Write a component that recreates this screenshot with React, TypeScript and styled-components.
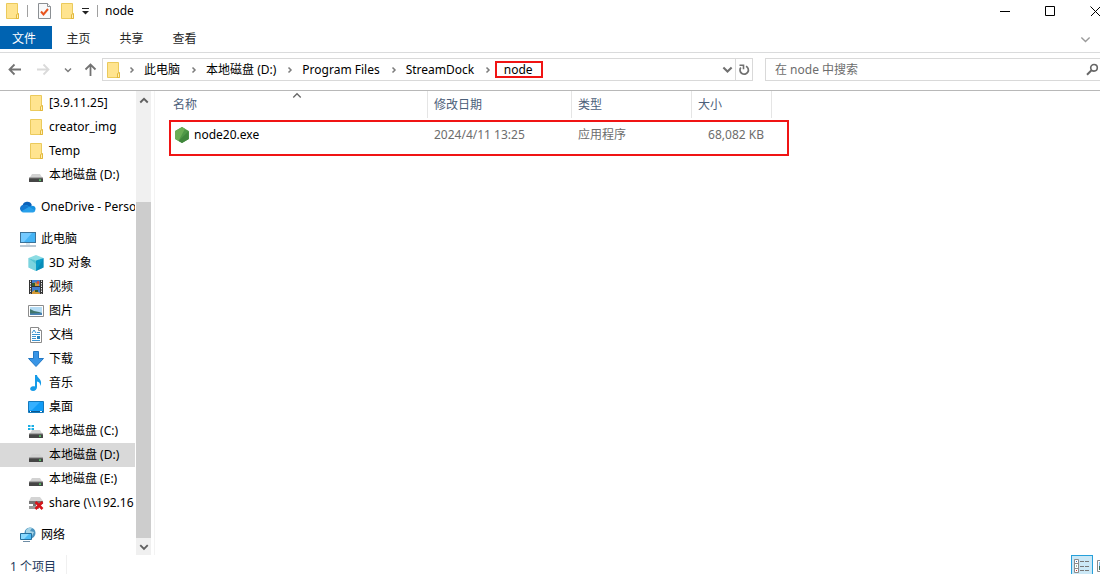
import React from 'react';
import styled, { createGlobalStyle } from 'styled-components';

const GlobalStyle = createGlobalStyle`
  * { box-sizing: border-box; }
  body {
    margin: 0;
    background: #fff;
    color: #000;
    font: 12px/16px "Noto Sans", "Noto Sans CJK SC", sans-serif;
  }
  button, input { font: inherit; color: inherit; }
  button { border: 0; padding: 0; background: none; }
  svg { display: block; flex: none; }
`;

const Window = styled.div`
  display: flex;
  flex-direction: column;
  min-height: 100vh;
  overflow: hidden;
`;

const TitleBar = styled.header`
  display: flex;
  align-items: center;
  height: 26px;
  padding: 0 0 4px 6px;
`;

const QuickTools = styled.div`
  display: flex;
  align-items: center;
  gap: 8px;
`;

const Divider = styled.span`
  width: 1px;
  height: 12px;
  background: #a0a0a0;
`;

const IconButton = styled.button`
  display: flex;
  align-items: center;
  justify-content: center;
  flex: none;
`;

const WindowTitle = styled.h1`
  margin: 0 0 0 7px;
  font-size: 12px;
  font-weight: 400;
`;

const WindowControls = styled.div`
  display: flex;
  gap: 35px;
  margin-left: auto;
`;

const Ribbon = styled.nav`
  display: flex;
  align-items: flex-start;
  height: 27px;
  padding-right: 9px;
  border-bottom: 1px solid #dadbdc;
`;

const Tab = styled.button<{ $primary?: boolean }>`
  width: ${p => (p.$primary ? 52 : 53)}px;
  height: 23px;
  padding: 2px ${p => (p.$primary ? 4 : 0)}px 0 0;
  background: ${p => (p.$primary ? '#0063b1' : 'transparent')};
  color: ${p => (p.$primary ? '#fff' : '#262626')};
`;

const RibbonToggle = styled(IconButton)`
  height: 26px;
  margin-left: auto;
`;

const NavBar = styled.div`
  display: flex;
  align-items: center;
  height: 38px;
  padding: 0 0 4px 6px;
  border-bottom: 1px solid #b8b8b8;
`;

const NavButtons = styled.div`
  display: flex;
  align-items: center;
  gap: 12px;
  width: 96px;
`;

const HistoryButton = styled(IconButton)`
  padding: 0 2px;
`;

const AddressBox = styled.div`
  display: flex;
  align-items: center;
  flex: 1;
  height: 23px;
  margin-right: 12px;
  border: 1px solid #d9d9d9;
  padding-left: 4px;
`;

const Crumbs = styled.ol`
  display: flex;
  align-items: center;
  flex: 1;
  margin: 0;
  padding: 0;
  list-style: none;
`;

const Crumb = styled.li`
  display: flex;
  align-items: center;
`;

const CrumbArrow = styled.span`
  display: flex;
  justify-content: center;
  width: 24px;
`;

const CrumbButton = styled.button<{ $marked?: boolean }>`
  height: 17px;
  padding-right: 2px;
  line-height: 13px;
  white-space: nowrap;
  ${p => p.$marked && `
    width: 48px;
    margin-left: -5px;
    border: 2px solid #f01414;
  `}
`;

const RefreshButton = styled(IconButton)`
  width: 17px;
  height: 21px;
  margin-left: 2px;
  border-left: 1px solid #d9d9d9;
`;

const SearchBox = styled.label`
  display: flex;
  align-items: center;
  width: 335px;
  height: 23px;
  padding: 0 1px 0 9px;
  border: 1px solid #d9d9d9;
  border-right: 0;
`;

const SearchInput = styled.input`
  flex: 1;
  min-width: 0;
  padding: 0;
  border: 0;
  outline: 0;
  &::placeholder { color: #6d6d6d; opacity: 1; }
`;

const Body = styled.div`
  display: flex;
  flex: 1;
`;

const Sidebar = styled.aside`
  display: flex;
  width: 155px;
  padding-right: 3px;
  border-right: 1px solid #f3f3f3;
`;

const Tree = styled.nav`
  display: flex;
  flex-direction: column;
  gap: 8px;
  width: 136px;
  padding-bottom: 8px;
  border-right: 1px solid #fff;
`;

const TreeGroup = styled.ul`
  margin: 0;
  padding: 0;
  list-style: none;
`;

const TreeItem = styled.button<{ $root?: boolean; $selected?: boolean }>`
  display: flex;
  align-items: center;
  gap: 5px;
  width: 100%;
  height: 24px;
  padding-left: ${p => (p.$root ? 20 : 28)}px;
  overflow: hidden;
  white-space: nowrap;
  background: ${p => (p.$selected ? '#d9d9d9' : 'transparent')};
`;

const ScrollTrack = styled.div`
  display: flex;
  flex-direction: column;
  width: 15px;
  background: #f0f0f0;
`;

const ScrollButton = styled(IconButton)`
  height: 17px;
`;

const ScrollThumb = styled.div`
  flex: 1;
  margin-top: 94px;
  background: #cdcdcd;
`;

const FilePane = styled.main`
  position: relative;
  flex: 1;
  padding-left: 12px;
`;

const FileTable = styled.table`
  width: 605px;
  table-layout: fixed;
  border-collapse: separate;
  border-spacing: 0;
`;

const HeadCell = styled.th<{ $width: number }>`
  position: relative;
  width: ${p => p.$width}px;
  height: 27px;
  padding: 0 6px;
  border-right: 1px solid #e5e5e5;
  color: #4c607a;
  font-weight: 400;
  text-align: left;
`;

const SortMark = styled.span`
  position: absolute;
  top: -1px;
  left: 50%;
  transform: translateX(-50%);
`;

const Cell = styled.td<{ $right?: boolean }>`
  height: 34px;
  padding: 0 8px 0 6px;
  color: #6d6d6d;
  text-align: ${p => (p.$right ? 'right' : 'left')};
`;

const FileName = styled.span`
  display: flex;
  align-items: center;
  gap: 4px;
  padding-left: 1px;
  color: #000;
`;

const Highlight = styled.div`
  position: absolute;
  top: 29px;
  left: 14px;
  width: 620px;
  height: 36px;
  border: 2px solid #f01414;
  pointer-events: none;
`;

const StatusBar = styled.footer`
  display: flex;
  align-items: flex-start;
  height: 19px;
  padding-left: 10px;
  overflow: hidden;
  color: #1e395b;
  line-height: 24px;
`;

const StatusCount = styled.span`
  padding-right: 10px;
  border-right: 1px solid #f0f0f0;
`;

const ViewButtons = styled.div`
  display: flex;
  gap: 4px;
  margin-left: auto;
`;

const ViewButton = styled(IconButton)<{ $active?: boolean }>`
  width: ${p => (p.$active ? 22 : 3)}px;
  height: 22px;
  overflow: hidden;
  background: ${p => (p.$active ? '#cbe8f6' : 'transparent')};
  border: ${p => (p.$active ? '1px solid #26a0da' : '0')};
`;

const FolderIcon = ({ box = 13 }: { box?: number }) => (
  <svg width={box} height="16" viewBox={`${box > 13 ? -2 : 0} 0 ${box} 16`}>
    <path d="M.5.5h11v10.500h1v4.500H.5z" fill="#ffe48f" stroke="#ebca5c" />
    <path d="M10.500 15V11.500L12.500 10.500V15.500H10z" fill="#fff0b5" stroke="#e3b93d" />
  </svg>
);

const CheckPageIcon = () => (
  <svg width="17" height="16" viewBox="-2 0 17 16">
    <path d="M.5.5h9l3 3v12H.5z" fill="#f8f9fa" stroke="#8b8f93" />
    <path d="M9.500.5v3h3" fill="#fff" stroke="#8b8f93" />
    <path d="M3 8.500l2.500 3L10 6" fill="none" stroke="#e8541e" strokeWidth="2" />
  </svg>
);

type ChevronProps = { dir: 'up' | 'down' | 'right'; size?: number; color?: string; weight?: number };
const Chevron = ({ dir, size = 8, color = '#7c7c7c', weight = 1.5 }: ChevronProps) => {
  const d = { up: 'M1 6l3-3 3 3', down: 'M1 2.500l3 3 3-3', right: 'M2.500 1.500L5 4 2.500 6.500' }[dir];
  return (
    <svg width={size} height={size} viewBox="0 0 8 8">
      <path d={d} fill="none" stroke={color} strokeWidth={weight} />
    </svg>
  );
};

const Arrow = ({ dir, color }: { dir: 'left' | 'right' | 'up'; color: string }) => (
  <svg width="13" height="13" viewBox="0 0 13 13">
    <g
      fill="none"
      stroke={color}
      strokeWidth="1.800"
      transform={dir === 'right' ? 'rotate(180 6.500 6.500)' : dir === 'up' ? 'rotate(90 6.500 6.500)' : undefined}
    >
      <path d="M1.500 6.500H13M6.500 1.500l-5 5 5 5" />
    </g>
  </svg>
);

const DriveShape = () => (
  <>
    <path d="M4 6h8l2.500 4H1.500z" fill="#d2d2d2" />
    <rect x="1" y="10" width="14" height="4" rx=".5" fill="#454545" />
    <path d="M1 10h14" stroke="#777" />
    <rect x="11" y="11.500" width="2" height="1.200" fill="#5cf070" />
  </>
);

const DriveIcon = () => (
  <svg width="16" height="16" viewBox="0 0 16 16"><g transform="translate(0 1)"><DriveShape /></g></svg>
);

const SystemDriveIcon = () => (
  <svg width="16" height="16" viewBox="0 0 16 16">
    <g transform="translate(0 1)"><DriveShape /></g>
    <path d="M0 2h2.500v2H0zM3.500 2H6v2H3.500zM0 5h2.500v2H0zM3.500 5H6v2H3.500z" fill="#19aee5" />
  </svg>
);

const ShareIcon = () => (
  <svg width="16" height="16" viewBox="0 0 16 16">
    <path d="M3 2h9l3 4H1z" fill="#d4d4d4" />
    <path d="M1 6h14v3H1zM5 9h3v3H5z" fill="#777" />
    <path d="M1 11h10v3H1z" fill="#9b9b9b" />
    <path d="M7.500 7l7 7M14.500 7l-7 7" stroke="#d7141a" strokeWidth="2.500" />
  </svg>
);

const CloudIcon = () => (
  <svg width="16" height="16" viewBox="0 0 16 16">
    <path d="M2.500 7.200A4.800 4.800 0 0 1 11.800 6L9 13H3.500A3.500 3.500 0 0 1 2.500 7.200z" fill="#0b62b9" />
    <path d="M5 6.200q2-.4 4 1.300l4-.8a3.200 3.200 0 0 1 0 6.300H3.500L1 12z" fill="#1490df" />
    <path d="M1.300 12.200L9 7.800l6.300 3.700Q14.500 13.500 13 13.500H3.500q-1.400 0-2.200-1.300z" fill="#28a0ea" />
    <path d="M0 9.500a3.500 3.500 0 0 1 5-3.300l4 1.600-7.700 4.400A3.500 3.500 0 0 1 0 9.500z" fill="#1478d0" />
  </svg>
);

const ComputerIcon = () => (
  <svg width="16" height="16" viewBox="0 0 16 16">
    <rect x=".5" y="1.500" width="15" height="10" fill="#45b4f5" stroke="#3c7399" />
    <path d="M1 2h11L4 11H1z" fill="#74caff" />
    <path d="M6 12h4v2H6z" fill="#dbe8ef" />
    <path d="M0 15h16" stroke="#7691a8" />
  </svg>
);

const CubeIcon = () => (
  <svg width="16" height="16" viewBox="0 0 16 16">
    <path d="M8 0l7.500 3L8 6 .5 3z" fill="#8cdce3" />
    <path d="M.5 3L8 5.500V16L.5 12.500z" fill="#56c5d3" />
    <path d="M15.500 3L8 5.500V16l7.500-3.500z" fill="#0b9cc9" />
    <path d="M.5 3L8 9v7L.5 12.500z" fill="#9fe4ec" opacity=".5" />
    <path d="M15.500 3v9.500L8 16z" fill="#0784af" opacity=".6" />
  </svg>
);

const FilmIcon = () => (
  <svg width="16" height="16" viewBox="0 0 16 16">
    <path d="M1 1h14v14H1z" fill="#333" />
    <path d="M2.500 1.500v13M13.500 1.500v13" stroke="#e8e8e8" strokeDasharray="1.500 1" />
    <path d="M4 1h8v6H4zM4 8h8v7H4z" fill="#417ccc" />
    <path d="M4 6l3-3 2 2 2-3v5H4zM4 13l3-2 5 3v1H4z" fill="#d59a37" />
    <circle cx="10" cy="3.500" r="1.500" fill="#dd4c36" />
    <path d="M4 4h3v3H4zM7 11h3v2H7z" fill="#335c31" />
  </svg>
);

const PictureIcon = () => (
  <svg width="16" height="16" viewBox="0 0 16 16">
    <path d="M.5 2.500h15v11H.5z" fill="#fff" stroke="#8c8c8c" />
    <path d="M2 4h12v8H2z" fill="#b5dcf5" />
    <path d="M2 6l4 2 5 1 3 1v2H2z" fill="#40766c" />
    <path d="M2 10.500l12-.5v2H2z" fill="#4a83b4" />
  </svg>
);

const DocumentIcon = () => (
  <svg width="16" height="16" viewBox="0 0 16 16">
    <path d="M2.500.5h8l3 3v12h-11z" fill="#fff" stroke="#8a8a8a" />
    <path d="M10.500.5v3h3" fill="#eee" stroke="#8a8a8a" />
    <path d="M4 6l2-3 2 3M9 5.500h3M4 7.500h8M4 9.500h4M4 11.500h4M4 13.500h8" fill="none" stroke="#3d95d1" />
    <path d="M9 9h3v3H9z" fill="#2985bf" />
  </svg>
);

const DownloadIcon = () => (
  <svg width="16" height="16" viewBox="0 0 16 16">
    <path d="M5.500.5h5v7h5L8 15.500.5 7.500h5z" fill="#3995e6" stroke="#2378c4" />
  </svg>
);

const MusicIcon = () => (
  <svg width="16" height="16" viewBox="0 0 16 16">
    <path d="M7 0h2c0 3 5 4 4 9l-1 2c.5-3-1-4-3-4.500V12c0 2-1.500 4-4 4-3 0-4-3-1-4.500 1-.5 2-.5 3 0z" fill="#169be8" />
  </svg>
);

const DesktopIcon = () => (
  <svg width="16" height="16" viewBox="0 0 16 16">
    <path d="M.5 2.500h15v11H.5z" fill="#109cf7" stroke="#1479bd" />
    <path d="M1 3h11L4 11H1z" fill="#35b0ff" />
    <path d="M1 12.500h14" stroke="#0b568d" />
    <path d="M2 12.500h1M12 12.500h2" stroke="#fff" />
  </svg>
);

const NetworkIcon = () => (
  <svg width="16" height="16" viewBox="0 0 16 16">
    <circle cx="10" cy="6" r="5.500" fill="#4c94bf" />
    <path d="M6 3q4-4 6-2l-2 3 4 1-2 4-3-1-3-2z" fill="#a7d4e6" />
    <path d="M.5 6.500h11v6H.5z" fill="#4dbbf5" stroke="#25709e" />
    <path d="M1 7h8l-5 5H1z" fill="#8ad9ff" />
    <path d="M3 14.500h7" stroke="#6e8da5" />
  </svg>
);

const NodeIcon = () => (
  <svg width="16" height="16" viewBox="0 0 16 16">
    <path d="M8 0l6.800 4v8L8 16l-6.800-4V4z" fill="#4f9847" />
    <path d="M8 0l3 1.800L4.500 14 1.200 12V4z" fill="#6aad55" />
    <path d="M14.800 4v8L8 16l-3.500-2z" fill="#40873c" />
  </svg>
);

const RefreshIcon = () => (
  <svg width="12" height="12" viewBox="0 0 12 12">
    <path d="M8 2.200A4.200 4.200 0 1 1 2.800 3.500" fill="none" stroke="#707070" strokeWidth="1.700" />
    <path d="M1.500 1.200h4v4" fill="none" stroke="#707070" strokeWidth="1.600" />
  </svg>
);

const SearchIcon = () => (
  <svg width="13" height="13" viewBox="0 0 13 13">
    <circle cx="8" cy="4.800" r="3.300" fill="none" stroke="#666" strokeWidth="1.600" />
    <path d="M5.500 7.300L1 11.800" stroke="#666" strokeWidth="2" />
  </svg>
);

const DetailsIcon = () => (
  <svg width="16" height="14" viewBox="0 0 16 14">
    <path d="M.5.5h4v13h-4zM.5 4.500h4M.5 9.500h4" fill="#fff" stroke="#8b8b8b" />
    <path d="M2 2.500h1" stroke="#3a78b8" />
    <path d="M2 7h1" stroke="#2f8f5b" />
    <path d="M2 11.500h1" stroke="#d03030" />
    <path d="M6 2.500h4M11 2.500h4M6 7.500h4M11 7.500h4M6 11.500h4M11 11.500h4" stroke="#777" />
  </svg>
);

const ThumbsIcon = () => (
  <svg width="3" height="12" viewBox="0 0 3 12">
    <path d="M4 .5H.5v11H4" fill="#fff" stroke="#8b8b8b" />
    <path d="M2 2h1v4H2z" fill="#8fc6ec" />
    <path d="M2 6h1v4H2z" fill="#3b6d58" />
  </svg>
);

type Entry = { label: string; icon: React.ReactNode; root?: boolean; selected?: boolean };

const groups: Entry[][] = [
  [
    { label: '[3.9.11.25]', icon: <FolderIcon box={16} /> },
    { label: 'creator_img', icon: <FolderIcon box={16} /> },
    { label: 'Temp', icon: <FolderIcon box={16} /> },
    { label: '本地磁盘 (D:)', icon: <DriveIcon /> },
  ],
  [{ label: 'OneDrive - Perso', icon: <CloudIcon />, root: true }],
  [
    { label: '此电脑', icon: <ComputerIcon />, root: true },
    { label: '3D 对象', icon: <CubeIcon /> },
    { label: '视频', icon: <FilmIcon /> },
    { label: '图片', icon: <PictureIcon /> },
    { label: '文档', icon: <DocumentIcon /> },
    { label: '下载', icon: <DownloadIcon /> },
    { label: '音乐', icon: <MusicIcon /> },
    { label: '桌面', icon: <DesktopIcon /> },
    { label: '本地磁盘 (C:)', icon: <SystemDriveIcon /> },
    { label: '本地磁盘 (D:)', icon: <DriveIcon />, selected: true },
    { label: '本地磁盘 (E:)', icon: <DriveIcon /> },
    { label: 'share (\\\\192.16', icon: <ShareIcon /> },
  ],
  [{ label: '网络', icon: <NetworkIcon />, root: true }],
];

const path = ['此电脑', '本地磁盘 (D:)', 'Program Files', 'StreamDock', 'node'];

export default function App() {
  return (
    <>
      <GlobalStyle />
      <Window>
        <TitleBar>
          <QuickTools>
            <FolderIcon />
            <Divider />
            <IconButton aria-label="属性"><CheckPageIcon /></IconButton>
            <IconButton aria-label="新建文件夹"><FolderIcon /></IconButton>
            <IconButton aria-label="自定义快速访问工具栏">
              <svg width="7" height="8" viewBox="0 0 7 8">
                <path d="M0 1.500h7" stroke="#222" />
                <path d="M0 4h7L3.500 7.500z" fill="#222" />
              </svg>
            </IconButton>
            <Divider />
          </QuickTools>
          <WindowTitle>node</WindowTitle>
          <WindowControls>
            <IconButton aria-label="最小化">
              <svg width="10" height="10" viewBox="0 0 10 10"><path d="M0 5.500h10" stroke="#000" /></svg>
            </IconButton>
            <IconButton aria-label="最大化">
              <svg width="10" height="10" viewBox="0 0 10 10"><path d="M.5.5h9v9h-9z" fill="none" stroke="#000" /></svg>
            </IconButton>
            <IconButton aria-label="关闭">
              <svg width="10" height="10" viewBox="0 0 10 10"><path d="M.5.5l10 10M10.500.5l-10 10" stroke="#000" /></svg>
            </IconButton>
          </WindowControls>
        </TitleBar>

        <Ribbon>
          <Tab $primary>文件</Tab>
          <Tab>主页</Tab>
          <Tab>共享</Tab>
          <Tab>查看</Tab>
          <RibbonToggle aria-label="展开功能区">
            <Chevron dir="down" size={11} color="#9a9a9a" weight={1} />
          </RibbonToggle>
        </Ribbon>

        <NavBar>
          <NavButtons>
            <HistoryButton aria-label="后退"><Arrow dir="left" color="#737373" /></HistoryButton>
            <HistoryButton aria-label="前进"><Arrow dir="right" color="#dadada" /></HistoryButton>
            <IconButton aria-label="最近浏览的位置"><Chevron dir="down" /></IconButton>
            <IconButton aria-label="上移"><Arrow dir="up" color="#737373" /></IconButton>
          </NavButtons>
          <AddressBox>
            <FolderIcon />
            <Crumbs>
              {path.map((name, i) => (
                <Crumb key={name}>
                  <CrumbArrow><Chevron dir="right" /></CrumbArrow>
                  <CrumbButton $marked={i === path.length - 1}>{name}</CrumbButton>
                </Crumb>
              ))}
            </Crumbs>
            <IconButton aria-label="以前的位置"><Chevron dir="down" size={11} color="#707070" /></IconButton>
            <RefreshButton aria-label="刷新"><RefreshIcon /></RefreshButton>
          </AddressBox>
          <SearchBox>
            <SearchInput type="text" aria-label="搜索" placeholder="在 node 中搜索" />
            <SearchIcon />
          </SearchBox>
        </NavBar>

        <Body>
          <Sidebar>
            <Tree>
              {groups.map((group, g) => (
                <TreeGroup key={g}>
                  {group.map(item => (
                    <li key={item.label}>
                      <TreeItem $root={item.root} $selected={item.selected}>
                        {item.icon}
                        {item.label}
                      </TreeItem>
                    </li>
                  ))}
                </TreeGroup>
              ))}
            </Tree>
            <ScrollTrack>
              <ScrollButton aria-label="向上滚动"><Chevron dir="up" size={10} color="#606060" /></ScrollButton>
              <ScrollThumb />
              <ScrollButton aria-label="向下滚动"><Chevron dir="down" size={10} color="#606060" /></ScrollButton>
            </ScrollTrack>
          </Sidebar>

          <FilePane>
            <FileTable>
              <thead>
                <tr>
                  <HeadCell $width={261}>
                    名称
                    <SortMark><Chevron dir="up" size={10} weight={1} color="#666" /></SortMark>
                  </HeadCell>
                  <HeadCell $width={144}>修改日期</HeadCell>
                  <HeadCell $width={120}>类型</HeadCell>
                  <HeadCell $width={80}>大小</HeadCell>
                </tr>
              </thead>
              <tbody>
                <tr>
                  <Cell><FileName><NodeIcon />node20.exe</FileName></Cell>
                  <Cell>2024/4/11 13:25</Cell>
                  <Cell>应用程序</Cell>
                  <Cell $right>68,082 KB</Cell>
                </tr>
              </tbody>
            </FileTable>
            <Highlight />
          </FilePane>
        </Body>

        <StatusBar>
          <StatusCount>1 个项目</StatusCount>
          <ViewButtons>
            <ViewButton $active aria-label="详细信息"><DetailsIcon /></ViewButton>
            <ViewButton aria-label="大缩略图"><ThumbsIcon /></ViewButton>
          </ViewButtons>
        </StatusBar>
      </Window>
    </>
  );
}
